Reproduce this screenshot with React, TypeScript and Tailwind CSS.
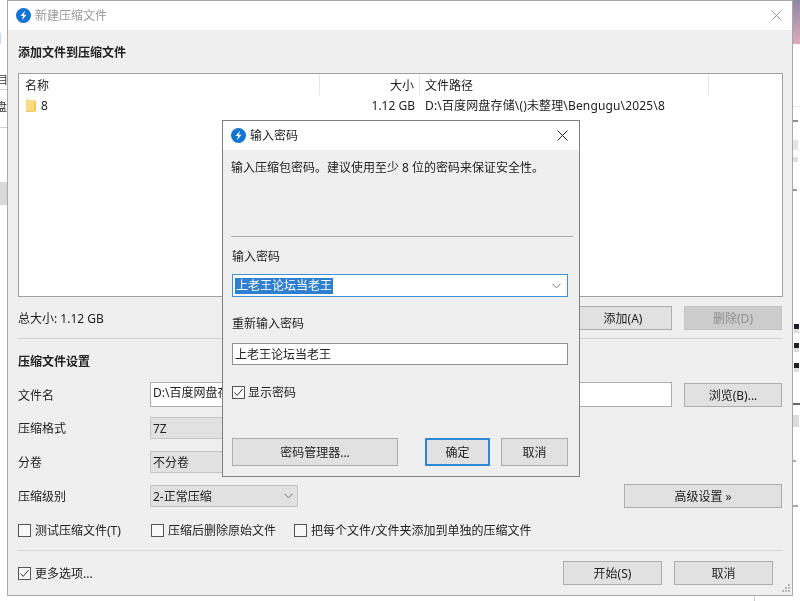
import React from "react";

const font = { fontFamily: '"Noto Sans", "Noto Sans CJK SC", sans-serif' };

function AppIcon() {
  return (
    <svg width="15" height="15" viewBox="0 0 16 16" className="shrink-0">
      <circle cx="8" cy="8" r="8" fill="#1474d4" />
      <path d="M9.6 3 L4.8 8.6 H7.6 L6.4 13 L11.2 7.2 H8.4 Z" fill="#fff" />
    </svg>
  );
}

function CloseIcon({ color }: { color: string }) {
  return (
    <svg width="11" height="11" viewBox="0 0 11 11">
      <path d="M0.5 0.5 L10.5 10.5 M10.5 0.5 L0.5 10.5" stroke={color} strokeWidth="1" fill="none" />
    </svg>
  );
}

function Chevron() {
  return (
    <svg width="9" height="6" viewBox="0 0 9 6" className="shrink-0">
      <path d="M0.5 0.8 L4.5 4.8 L8.5 0.8" stroke="#707070" strokeWidth="1" fill="none" />
    </svg>
  );
}

function Check({ checked, className = "" }: { checked?: boolean; className?: string }) {
  return (
    <span className={`w-[13px] h-[13px] shrink-0 border border-[#555] bg-[#f8f8f8] flex items-center justify-center ${className}`}>
      {checked && (
        <svg width="11" height="11" viewBox="0 0 11 11">
          <path d="M1.5 5.5 L4.2 8.4 L9.6 2" stroke="#333" strokeWidth="1" fill="none" />
        </svg>
      )}
    </span>
  );
}

function Btn({ className = "", focus, children }: { className?: string; focus?: boolean; children: React.ReactNode }) {
  return (
    <div
      className={`flex items-center justify-center pt-[2px] bg-[#e1e1e1] text-[#222] ${
        focus ? "border-2 border-[#2f86d4]" : "border border-[#adadad]"
      } ${className}`}
    >
      {children}
    </div>
  );
}

function FormRow({ label, className = "", children }: { label: string; className?: string; children: React.ReactNode }) {
  return (
    <div className={`flex items-center ${className}`}>
      <div className="w-[132px] shrink-0 pt-[2px] text-[#222]">{label}</div>
      {children}
    </div>
  );
}

function Select({ value, chevron }: { value: string; chevron?: boolean }) {
  return (
    <div className="w-[148px] h-[22px] shrink-0 flex items-center justify-between pl-[2px] pr-[4px] bg-[#e1e1e1] border border-[#c4c4c4] text-[#222]">
      <span className="pt-[2px]">{value}</span>
      {chevron && <Chevron />}
    </div>
  );
}

function LeftStrip() {
  return (
    <div className="w-[7px] shrink-0 h-full overflow-hidden flex flex-col bg-white">
      <div className="h-[33px] shrink-0" />
      <div className="h-[11px] w-[1px] shrink-0 bg-[#bcdcf0]" />
      <div className="h-[30px] shrink-0" />
      <div className="h-[12px] shrink-0 text-[11px] leading-[12px] text-[#333] -ml-[3px] whitespace-nowrap">目</div>
      <div className="h-[1px] mt-[3px] shrink-0 bg-[#d0d0d0]" />
      <div className="h-[12px] mt-[11px] shrink-0 text-[11px] leading-[12px] text-[#333] -ml-[4px] whitespace-nowrap">盘</div>
      <div className="h-[1px] mt-[14px] shrink-0 bg-[#d0d0d0]" />
      <div className="h-[54px] shrink-0" />
      <div className="h-[23px] shrink-0 bg-[#d9d9d9]" />
    </div>
  );
}

function RightStrip() {
  return (
    <div className="w-[7px] shrink-0 h-full overflow-hidden flex flex-col bg-white">
      <div className="h-[44px] shrink-0 bg-gradient-to-b from-[#8c88a8] to-[#e0aab8]" />
      <div className="h-[62px] shrink-0" />
      <div className="h-[1px] shrink-0 bg-[#ececec]" />
      <div className="h-[13px] shrink-0" />
      <div className="h-[2px] w-[5px] shrink-0 bg-[#8c8c8c]" />
      <div className="h-[18px] shrink-0" />
      <div className="h-[10px] w-[5px] shrink-0 bg-[#e4e4e4]" />
      <div className="h-[7px] shrink-0" />
      <div className="h-[5px] w-[5px] shrink-0 bg-[#dedede]" />
      <div className="h-[27px] shrink-0" />
      <div className="h-[2px] w-[4px] shrink-0 bg-[#999]" />
      <div className="h-[133px] shrink-0" />
      <div className="h-[5px] w-[5px] ml-[1px] shrink-0 bg-[#1c1c30]" />
      <div className="h-[4px] w-[5px] ml-[1px] shrink-0 bg-[#ddd]" />
      <div className="h-[10px] shrink-0" />
      <div className="h-[5px] w-[5px] ml-[1px] shrink-0 bg-[#222]" />
      <div className="h-[4px] w-[5px] ml-[1px] shrink-0 bg-[#ddd]" />
      <div className="h-[11px] shrink-0" />
      <div className="h-[5px] w-[5px] ml-[1px] shrink-0 bg-[#222]" />
      <div className="h-[4px] w-[5px] ml-[1px] shrink-0 bg-[#ddd]" />
      <div className="h-[31px] shrink-0" />
      <div className="h-[2px] shrink-0 bg-[#666]" />
      <div className="h-[10px] shrink-0" />
      <div className="h-[12px] w-[6px] shrink-0 bg-[#dcdcdc]" />
      <div className="h-[33px] shrink-0" />
      <div className="h-[2px] w-[3px] shrink-0 bg-[#aaa]" />
      <div className="h-[43px] shrink-0" />
      <div className="h-[2px] w-[5px] shrink-0 bg-[#aaa]" />
    </div>
  );
}

function MainWindow() {
  return (
    <div className="w-[786px] shrink-0 h-[596px] relative flex flex-col border border-[#a8a8a8] bg-[#efefef] text-[12px]">
      <div className="h-[29px] shrink-0 bg-white flex items-center pl-[8px] pr-[10px]">
        <AppIcon />
        <span className="ml-[4px] text-[#999]">新建压缩文件</span>
        <span className="ml-auto">
          <CloseIcon color="#999" />
        </span>
      </div>

      <div className="flex-1 flex flex-col pl-[10px] pr-[9px]">
        <div className="h-[18px] mt-[13px] leading-[20px] font-bold text-[#222]">添加文件到压缩文件</div>

        <div className="h-[224px] mt-[12px] shrink-0 bg-white border border-[#a0a0a0] text-[#222]">
          <div className="h-[21px] flex">
            <div className="w-[301px] pl-[6px] pt-[2px] border-r border-[#e5e5e5] flex items-center">名称</div>
            <div className="w-[100px] pr-[5px] pt-[2px] border-r border-[#e5e5e5] flex items-center justify-end">大小</div>
            <div className="w-[289px] pl-[5px] pt-[2px] border-r border-[#e5e5e5] flex items-center">文件路径</div>
          </div>
          <div className="h-[20px] flex">
            <div className="w-[301px] pl-[7px] flex items-center">
              <svg width="10" height="13" viewBox="0 0 10 13" className="shrink-0">
                <path d="M0 0.5 H2 L3 1.5 H10 V12 L8 13 H0 Z" fill="#f3c95a" />
                <path d="M0 0.5 H2 L3 1.5 H8 V12 H0 Z" fill="#fbdc86" />
              </svg>
              <span className="ml-[5px] pt-[2px]">8</span>
            </div>
            <div className="w-[100px] pr-[5px] pt-[2px] flex items-center justify-end whitespace-nowrap">1.12 GB</div>
            <div className="w-[289px] pl-[5px] pt-[2px] flex items-center whitespace-nowrap tracking-[0.15px]">D:\百度网盘存储\()未整理\Bengugu\2025\8</div>
          </div>
        </div>

        <div className="h-[24px] mt-[9px] flex items-center pr-[1px] text-[#222]">
          <span className="pt-[2px]">总大小: 1.12 GB</span>
          <Btn className="ml-auto w-[98px] h-[24px]">添加(A)</Btn>
          <div className="ml-[12px] w-[98px] h-[24px] flex items-center justify-center pt-[2px] bg-[#cccccc] border border-[#c4c4c4] text-[#8f8f8f]">删除(D)</div>
        </div>

        <div className="h-[1px] mt-[8px] mr-[1px] shrink-0 bg-[#cfcfcf]" />

        <div className="h-[18px] mt-[13px] leading-[20px] font-bold text-[#222]">压缩文件设置</div>

        <FormRow label="文件名" className="h-[25px] mt-[12px] pr-[1px]">
          <div className="w-[522px] h-[25px] shrink-0 flex items-center pl-[2px] pb-[3px] bg-white border border-[#adadad] text-[#222] whitespace-nowrap overflow-hidden">
            D:\百度网盘存储
          </div>
          <Btn className="ml-[12px] w-[98px] h-[24px]">浏览(B)...</Btn>
        </FormRow>

        <FormRow label="压缩格式" className="h-[22px] mt-[10px]">
          <Select value="7Z" />
        </FormRow>

        <FormRow label="分卷" className="h-[22px] mt-[12px]">
          <Select value="不分卷" />
        </FormRow>

        <FormRow label="压缩级别" className="h-[22px] mt-[12px] pr-[1px]">
          <Select value="2-正常压缩" chevron />
          <Btn className="ml-auto w-[158px] h-[24px] shrink-0">高级设置 »</Btn>
        </FormRow>

        <div className="h-[14px] mt-[16px] flex items-center text-[#222]">
          <div className="w-[133px] flex items-center gap-[4px]">
            <Check />
            <span className="pt-[2px]">测试压缩文件(T)</span>
          </div>
          <div className="w-[143px] flex items-center gap-[4px]">
            <Check />
            <span className="pt-[2px]">压缩后删除原始文件</span>
          </div>
          <div className="flex items-center gap-[4px]">
            <Check />
            <span className="pt-[2px]">把每个文件/文件夹添加到单独的压缩文件</span>
          </div>
        </div>

        <div className="h-[1px] mt-[13px] mr-[1px] shrink-0 bg-[#d4d4d4]" />

        <div className="h-[24px] mt-[10px] flex items-center pr-[10px] text-[#222]">
          <Check checked />
          <span className="ml-[4px] pt-[2px]">更多选项...</span>
          <Btn className="ml-auto w-[99px] h-[24px]">开始(S)</Btn>
          <Btn className="ml-[12px] w-[99px] h-[24px]">取消</Btn>
        </div>
      </div>

      <svg width="10" height="10" viewBox="0 0 10 10" className="absolute right-[1px] bottom-[1px]">
        <path d="M7 0h2v2H7zM4 3h2v2H4zM7 3h2v2H7zM1 6h2v2H1zM4 6h2v2H4zM7 6h2v2H7z" fill="#b5b5b5" />
      </svg>
    </div>
  );
}

function PasswordDialog() {
  return (
    <div className="absolute left-[222px] top-[120px] w-[358px] h-[357px] flex flex-col border border-[#7f7f7f] bg-[#efefef] text-[12px] text-[#222]">
      <div className="h-[29px] shrink-0 bg-white flex items-center pl-[8px] pr-[11px]">
        <AppIcon />
        <span className="ml-[4px]">输入密码</span>
        <span className="ml-auto">
          <CloseIcon color="#222" />
        </span>
      </div>
      <div className="flex-1 flex flex-col pl-[8px] pr-[6px]">
        <div className="h-[18px] mt-[9px] leading-[18px] whitespace-nowrap">输入压缩包密码。建议使用至少 8 位的密码来保证安全性。</div>
        <div className="h-[1px] mt-[59px] shrink-0 bg-[#a8a8a8]" />
        <div className="h-[18px] mt-[10px] leading-[20px] pl-[1px]">输入密码</div>
        <div className="h-[23px] w-[336px] ml-[1px] mt-[9px] flex items-center pl-[2px] pr-[6px] bg-white border border-[#3d8fd6]">
          <span className="bg-[#2f7fd0] text-white h-[16px] leading-[16px] px-[1px]">上老王论坛当老王</span>
          <span className="ml-auto">
            <Chevron />
          </span>
        </div>
        <div className="h-[18px] mt-[17px] leading-[20px] pl-[1px]">重新输入密码</div>
        <div className="h-[22px] w-[336px] ml-[1px] mt-[11px] flex items-center pl-[2px] pt-[2px] bg-white border border-[#8f8f8f]">上老王论坛当老王</div>
        <div className="h-[14px] mt-[20px] ml-[1px] flex items-center gap-[3px]">
          <Check checked />
          <span className="pt-[2px]">显示密码</span>
        </div>
        <div className="h-[28px] mt-[39px] ml-[1px] flex items-center">
          <Btn className="w-[166px] h-[28px]">密码管理器...</Btn>
          <Btn focus className="ml-[27px] w-[65px] h-[28px]">确定</Btn>
          <Btn className="ml-[11px] w-[67px] h-[28px]">取消</Btn>
        </div>
      </div>
    </div>
  );
}

export default function App() {
  return (
    <div className="relative w-[800px] h-[601px] overflow-hidden bg-white flex blur-[0.4px]" style={font}>
      <LeftStrip />
      <MainWindow />
      <RightStrip />
      <PasswordDialog />
      <div className="absolute left-[754px] top-[596px] w-[1px] h-[5px] bg-[#c8c8c8]" />
    </div>
  );
}
